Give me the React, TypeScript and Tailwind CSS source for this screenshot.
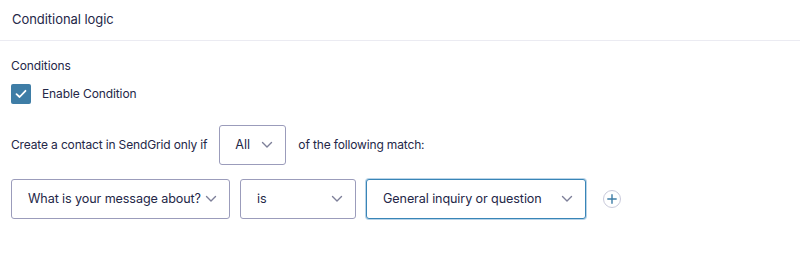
import React from "react";

const Chevron = () => (
  <svg width="12" height="8" viewBox="0 0 12 8" fill="none" className="shrink-0">
    <path d="M1.5 1.5L6 6L10.5 1.5" stroke="#7d7f99" strokeWidth="1.4" strokeLinecap="round" strokeLinejoin="round" />
  </svg>
);

function Select({ label, w, focus, pl = "pl-[16px]" }: { label: string; w: string; focus?: boolean; pl?: string }) {
  return (
    <div
      className={`${w} h-[40px] flex items-center justify-between ${pl} pr-[12px] rounded-[3px] bg-white border ${
        focus ? "border-[#3985b7] shadow-[0_0_0_1px_#b9d4e8]" : "border-[#9b9cbb]"
      }`}
    >
      <span className="whitespace-nowrap text-[12.6px] tracking-[-0.1px] text-[#242748]">{label}</span>
      <Chevron />
    </div>
  );
}

export default function App() {
  return (
    <div className="w-[800px] h-[258px] bg-white text-[#242748]" style={{ fontFamily: "Inter, 'Noto Sans', sans-serif" }}>
      <div className="h-[41px] flex items-center px-[12px] border-b border-[#ebebf2]">
        <span className="text-[13px] tracking-[-0.05px] text-[#242748]">Conditional logic</span>
      </div>
      <div className="px-[11px]">
        <div className="mt-[17px] text-[12px] leading-[16px] tracking-[-0.1px]">Conditions</div>
        <div className="mt-[10px] flex items-center">
          <div className="w-[20px] h-[20px] rounded-[2px] bg-[#3e7da6] flex items-center justify-center">
            <svg width="12" height="10" viewBox="0 0 12 10" fill="none">
              <path d="M1.5 5.2L4.6 8L10.5 1.8" stroke="white" strokeWidth="1.8" strokeLinecap="round" strokeLinejoin="round" />
            </svg>
          </div>
          <span className="ml-[11px] text-[12px] tracking-[-0.1px]">Enable Condition</span>
        </div>
        <div className="mt-[21px] flex items-center">
          <span className="text-[12px] tracking-[-0.15px] whitespace-nowrap">Create a contact in SendGrid only if</span>
          <div className="ml-[12px]">
            <Select label="All" w="w-[67px]" pl="pl-[15px]" />
          </div>
          <span className="ml-[12px] text-[12px] tracking-[-0.15px] whitespace-nowrap">of the following match:</span>
        </div>
        <div className="mt-[14px] flex items-center gap-[10px]">
          <Select label="What is your message about?" w="w-[219px]" />
          <Select label="is" w="w-[116px]" />
          <Select label="General inquiry or question" w="w-[220px]" focus />
          <svg width="20" height="20" viewBox="0 0 20 20" fill="none" className="ml-[6px]">
            <circle cx="10" cy="10" r="8.5" stroke="#c9cadb" strokeWidth="1" fill="white" />
            <path d="M10 5.8V14.2M5.8 10H14.2" stroke="#3e7da6" strokeWidth="1.4" strokeLinecap="round" />
          </svg>
        </div>
      </div>
    </div>
  );
}
